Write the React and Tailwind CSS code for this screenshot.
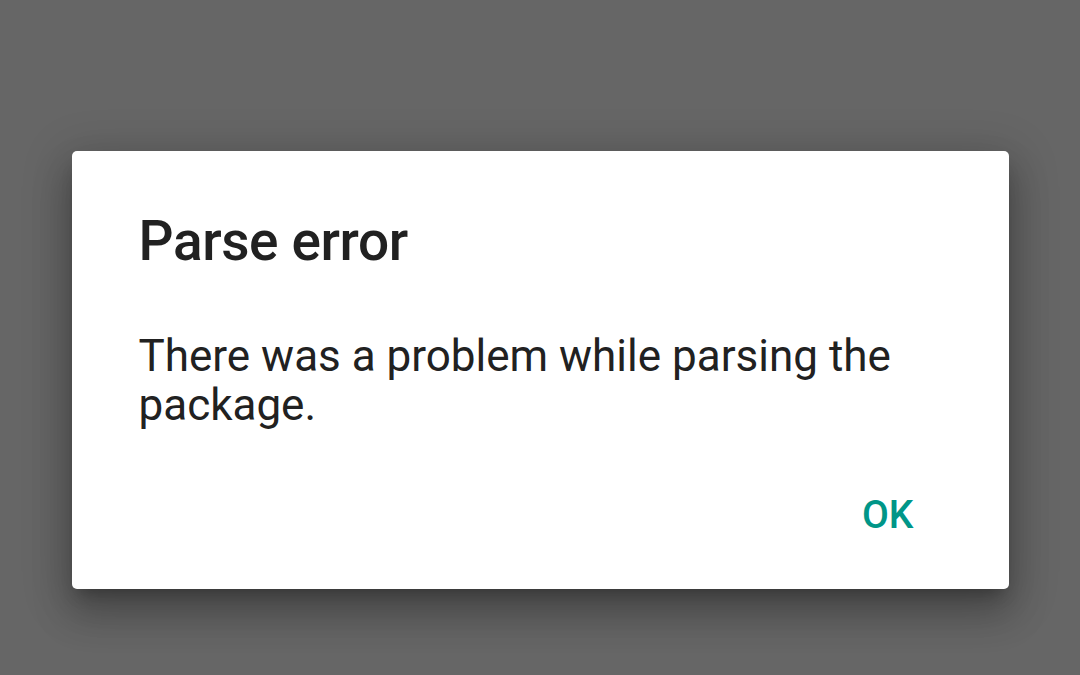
export default function App() {
  return (
    <div className="w-[1080px] h-[675px] bg-[#666666] flex items-start justify-center pt-[151px]" style={{ fontFamily: "Roboto, 'Noto Sans', sans-serif" }}>
      <div className="w-[937px] h-[438px] bg-white rounded-[5px] shadow-[0_24px_38px_3px_rgba(0,0,0,0.2),0_9px_46px_8px_rgba(0,0,0,0.16),0_11px_15px_-7px_rgba(0,0,0,0.25)] flex flex-col pl-[67px] pr-[95px] pt-[58px]">
        <div className="text-[55px] leading-[65px] font-medium tracking-[-0.4px] text-[#212121]">Parse error</div>
        <div className="mt-[58px] text-[44px] leading-[49px] text-[#212121]">
          There was a problem while parsing the package.
        </div>
        <div className="mt-[62px] flex justify-end">
          <span className="text-[39px] leading-[46px] font-medium text-[#009688]">OK</span>
        </div>
      </div>
    </div>
  );
}
